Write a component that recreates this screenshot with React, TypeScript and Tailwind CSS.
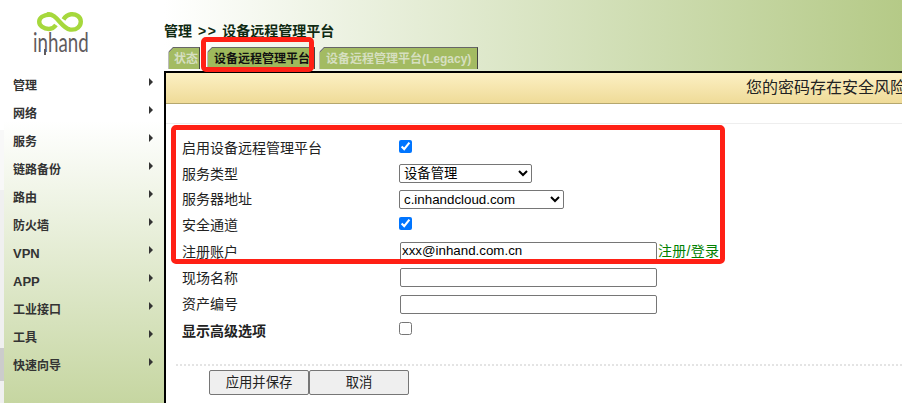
import { useState } from "react";

const menuItems = [
  { label: "管理", size: "text-[12px]" },
  { label: "网络", size: "text-[12px]" },
  { label: "服务", size: "text-[12px]" },
  { label: "链路备份", size: "text-[12px]" },
  { label: "路由", size: "text-[12px]" },
  { label: "防火墙", size: "text-[12px]" },
  { label: "VPN", size: "text-[13px]" },
  { label: "APP", size: "text-[13px]" },
  { label: "工业接口", size: "text-[12px]" },
  { label: "工具", size: "text-[12px]" },
  { label: "快速向导", size: "text-[12px]" },
];

const font = "font-['Liberation_Sans','Noto_Sans_CJK_SC',sans-serif]";

function Logo() {
  return (
    <div className="flex w-[54px] flex-col items-center">
      <svg width="46" height="20" viewBox="0 0 46 20" fill="none" stroke="#a6d83c" strokeWidth="4.4">
        <path d="M13 2.500C6 3 2.200 6 2.200 9.800C2.200 13.500 6.500 17 12 17C15 17 17.500 15 19 13" />
        <path d="M10 2.400C20 1 24 16 33 17.500C40 18.500 43.800 14 43.800 9.500C43.800 4.500 39 1.800 34 2.300C30 2.800 28 5 26.500 7.500" />
      </svg>
      <div className="relative mt-[-1px] h-[22px] w-[54px]">
        <div className="origin-left scale-x-[0.72] whitespace-nowrap font-['Lato',sans-serif] text-[26px] leading-[22px] text-[#5f5a5c]">
          inhand
        </div>
        <span className="absolute left-[11px] top-[18px] h-[6px] w-[2px] bg-[#5f5a5c]" />
      </div>
    </div>
  );
}

function Sidebar() {
  return (
    <aside className="flex w-[164px] shrink-0 bg-gradient-to-b from-white from-[30%] to-[#c6d6a1]">
      <div className="flex w-[4px] shrink-0 flex-col">
        <div className="h-[130px] bg-white" />
        <div className="h-[60px] bg-[#f8f8f8]" />
        <div className="h-[158px] bg-[#f0f0f0]" />
        <div className="h-[33px] bg-[#cccccc]" />
        <div className="flex-1 bg-[#f0f0f0]" />
      </div>
      <div className="min-w-0 flex-1">
        <div className="h-[72px] pl-[29px] pt-[12px]">
          <Logo />
        </div>
        <ul className="pl-[9px] pr-[11px]">
          {menuItems.map((item) => (
            <li key={item.label} className="flex h-[28px] items-center justify-between">
              <span className={`font-bold text-[#333333] ${item.size}`}>{item.label}</span>
              <span className="mb-[8px] h-0 w-0 border-y-[4px] border-l-[4px] border-y-transparent border-l-[#333333]" />
            </li>
          ))}
        </ul>
      </div>
    </aside>
  );
}

function Tab({ label, active, className }: { label: string; active?: boolean; className: string }) {
  return (
    <div
      className={`h-[22px] whitespace-nowrap border-t border-r border-l border-t-[#666666] border-r-[#444444] border-l-[#bbbbbb] text-[12px] font-bold leading-[23px] [clip-path:polygon(5px_0,100%_0,100%_100%,0_100%,0_5px)] ${className} ${
        active
          ? "bg-[linear-gradient(135deg,#777777_3px,#9eb95c_3px)] text-[#111111]"
          : "bg-[linear-gradient(135deg,#777777_3px,#a3bb62_3px)] text-[#d6dfc0]"
      }`}
    >
      {label}
    </div>
  );
}

function Row({
  label,
  bold,
  nudge,
  tall,
  children,
}: {
  label: string;
  bold?: boolean;
  nudge?: boolean;
  tall?: boolean;
  children: React.ReactNode;
}) {
  return (
    <div className={`flex items-center ${tall ? "h-[27px]" : "h-[26px]"}`}>
      <label className={`w-[217px] shrink-0 text-[14px] text-[#222222] ${bold ? "font-bold" : ""} ${nudge ? "pt-[2px]" : ""}`}>
        {label}
      </label>
      {children}
    </div>
  );
}

const inputClass = "ml-[1px] h-[19px] w-[257px] rounded-[2px] border border-[#767676] bg-white px-[1px] text-[13.33px] text-black";
const selectClass = "h-[19px] rounded-[2px] border border-[#767676] bg-white text-[13.33px] text-black";
const buttonClass = "h-[25px] w-[100px] rounded-[2px] border border-[#767676] bg-[#efefef] text-[13.33px] text-[#222222]";

export default function App() {
  const [enabled, setEnabled] = useState(true);
  const [secure, setSecure] = useState(true);
  const [advanced, setAdvanced] = useState(false);

  return (
    <div className={`relative flex h-[403px] w-[902px] overflow-hidden bg-white ${font}`}>
      <Sidebar />
      <main className="flex min-w-0 flex-1 flex-col">
        <header className="h-[71px] shrink-0 bg-gradient-to-r from-white to-[#b5ca87]">
          <div className="pt-[23px] text-[14px] font-bold leading-[17px] text-[#0f2a12]">
            管理<span className="ml-[6px] mr-[5px] tracking-[1.5px]">{">>"}</span>设备远程管理平台
          </div>
          <div className="mt-[7px] flex pl-[4px]">
            <Tab label="状态" className="w-[32px] pl-[5px]" />
            <Tab label="设备远程管理平台" active className="ml-[7px] w-[108px] pl-[6px]" />
            <Tab label="设备远程管理平台(Legacy)" className="ml-[4px] w-[159px] pl-[6px]" />
          </div>
        </header>
        <div className="flex-1 border-t-2 border-l-2 border-black">
          <div className="flex h-[31px] items-center overflow-hidden border-b border-[#b5a76e] bg-gradient-to-b from-[#fcf0c3] to-[#efdb98] pl-[580px]">
            <span className="whitespace-nowrap text-[16px] text-[#222222]">您的密码存在安全风险</span>
          </div>
          <div className="mt-[19px] border-t border-[#eeeeee] pl-[16px] pt-[10px]">
            <Row label="启用设备远程管理平台" nudge>
              <input type="checkbox" checked={enabled} onChange={(e) => setEnabled(e.target.checked)} className="mb-[1px] h-[13px] w-[13px]" />
            </Row>
            <Row label="服务类型" nudge>
              <select className={`${selectClass} w-[133px]`} defaultValue="device">
                <option value="device">设备管理</option>
              </select>
            </Row>
            <Row label="服务器地址">
              <select className={`${selectClass} w-[165px]`} defaultValue="c">
                <option value="c">c.inhandcloud.com</option>
              </select>
            </Row>
            <Row label="安全通道">
              <input type="checkbox" checked={secure} onChange={(e) => setSecure(e.target.checked)} className="mb-[3px] h-[13px] w-[13px]" />
            </Row>
            <Row label="注册账户" nudge>
              <input className={inputClass} defaultValue="xxx@inhand.com.cn" />
              <a className="ml-[1px] whitespace-nowrap text-[14px] tracking-[0.3px] text-[#008000]">注册/登录</a>
            </Row>
            <Row label="现场名称" nudge tall>
              <input className={inputClass} />
            </Row>
            <Row label="资产编号">
              <input className={inputClass} />
            </Row>
            <Row label="显示高级选项" bold nudge>
              <input type="checkbox" checked={advanced} onChange={(e) => setAdvanced(e.target.checked)} className="mb-[3px] h-[13px] w-[13px]" />
            </Row>
          </div>
          <div className="ml-[10px] mt-[21px] border-t-2 border-dotted border-[#e4e4e4] pl-[33px] pt-[4px]">
            <div className="flex">
              <button className={buttonClass}>应用并保存</button>
              <button className={buttonClass}>取消</button>
            </div>
          </div>
        </div>
      </main>

      {/* red annotation boxes drawn over the screenshot */}
      <div className="pointer-events-none absolute left-[171px] top-[125px] h-[139px] w-[554px] rounded-[5px] border-[5px] border-[#ff2015]" />
      <div className="pointer-events-none absolute left-[201px] top-[37px] h-[35px] w-[113px] rounded-[5px] border-[5px] border-[#ff2015]" />
    </div>
  );
}
